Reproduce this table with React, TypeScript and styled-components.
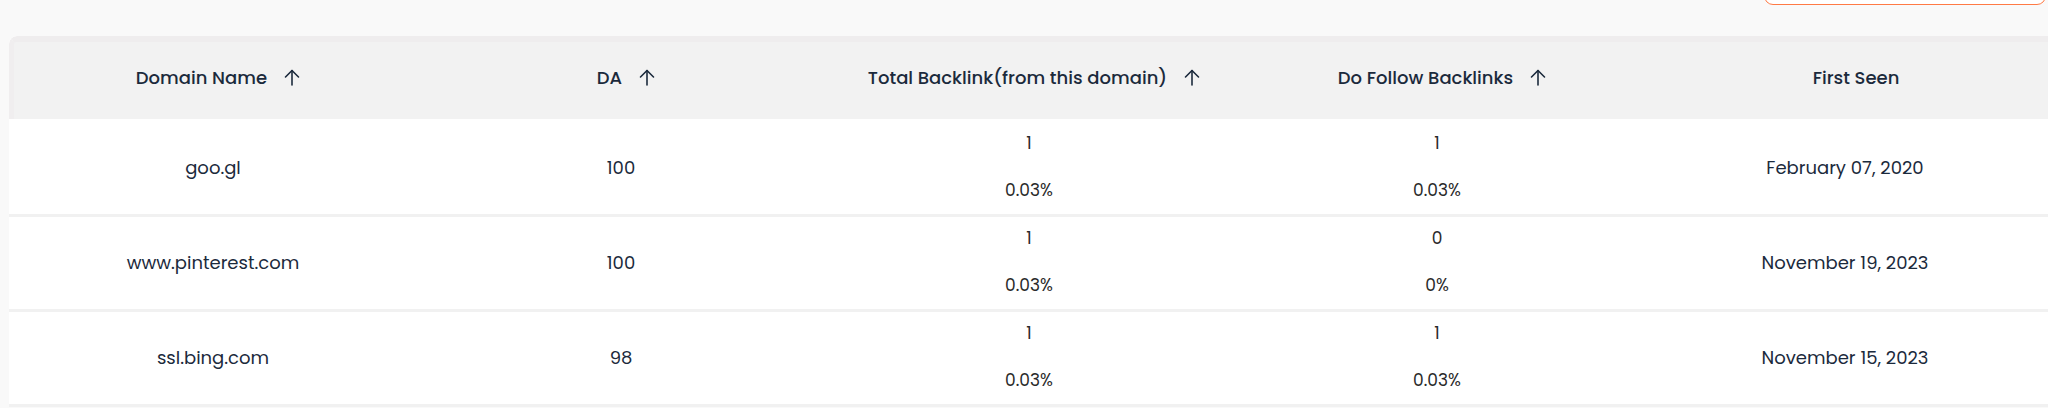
import React from "react";
import styled, { createGlobalStyle } from "styled-components";

const GlobalStyle = createGlobalStyle`
  html, body {
    margin: 0;
    padding: 0;
    background: #f9f9f9;
    overflow: hidden;
  }
  body {
    font-family: Poppins, Inter, "Noto Sans", sans-serif;
  }
`;

const Page = styled.div`
  width: 2048px;
  height: 408px;
  padding-left: 9px;
  box-sizing: border-box;
  background: #f9f9f9;
  display: flex;
  flex-direction: column;
`;

const Toolbar = styled.div`
  height: 36px;
  flex: none;
  display: flex;
  justify-content: flex-end;
  align-items: flex-start;
  padding-right: 2px;
`;

const ExportButton = styled.div`
  width: 282px;
  height: 40px;
  margin-top: -35px;
  border: 1.5px solid #ff7a45;
  border-radius: 9px;
  background: #ffffff;
  box-sizing: border-box;
`;

const Table = styled.div`
  width: 2040px;
  display: flex;
  flex-direction: column;
  background: #ffffff;
  border-top-left-radius: 8px;
  overflow: hidden;
`;

const Grid = styled.div`
  display: grid;
  grid-template-columns: repeat(5, 408px);
`;

const HeaderRow = styled(Grid)`
  height: 83px;
  box-sizing: border-box;
  background: #f2f2f2;
  border-top: 6px solid #efedee;
  border-left: 5px solid #f0eeef;
  border-top-left-radius: 8px;
  padding-bottom: 7px;
`;

const HeaderCell = styled.div<{ $shift?: number }>`
  display: flex;
  align-items: center;
  justify-content: center;
  gap: 17px;
  font-size: 18px;
  font-weight: 500;
  color: #1b2a3c;
  padding-left: ${(p) => p.$shift ?? 0}px;
`;

const SortIcon = styled.svg`
  width: 16px;
  height: 17px;
  flex: none;
  color: #1b2a3c;
`;

const Body = styled.div`
  padding-top: 3px;
  display: flex;
  flex-direction: column;
`;

const Row = styled(Grid)`
  height: 95px;
  box-sizing: border-box;
  border-bottom: 3px solid #f1f1f1;
`;

const Cell = styled.div`
  display: flex;
  align-items: center;
  justify-content: center;
  font-size: 18px;
  font-weight: 400;
  color: #1b2a3c;
  padding-bottom: 2px;
`;

const Stack = styled.div`
  display: flex;
  flex-direction: column;
  align-items: center;
  gap: 26px;
`;

const SubValue = styled.span`
  font-size: 17px;
  line-height: 21px;
  color: #2a2a2a;
`;

const ArrowUp = () => (
  <SortIcon viewBox="0 0 16 17" fill="none" stroke="currentColor" strokeWidth={1.6} strokeLinecap="round" strokeLinejoin="round">
    <path d="M8 16V1.5" />
    <path d="M1.5 8L8 1.5L14.5 8" />
  </SortIcon>
);

type Rec = {
  domain: string;
  da: string;
  total: [string, string];
  follow: [string, string];
  seen: string;
};

const rows: Rec[] = [
  { domain: "goo.gl", da: "100", total: ["1", "0.03%"], follow: ["1", "0.03%"], seen: "February 07, 2020" },
  { domain: "www.pinterest.com", da: "100", total: ["1", "0.03%"], follow: ["0", "0%"], seen: "November 19, 2023" },
  { domain: "ssl.bing.com", da: "98", total: ["1", "0.03%"], follow: ["1", "0.03%"], seen: "November 15, 2023" },
];

const headers: { label: string; sortable: boolean; shift?: number }[] = [
  { label: "Domain Name", sortable: true },
  { label: "DA", sortable: true },
  { label: "Total Backlink(from this domain)", sortable: true },
  { label: "Do Follow Backlinks", sortable: true },
  { label: "First Seen", sortable: false, shift: 12 },
];

export default function App() {
  return (
    <>
      <GlobalStyle />
      <Page>
        <Toolbar>
          <ExportButton />
        </Toolbar>
        <Table>
          <HeaderRow>
            {headers.map((h) => (
              <HeaderCell key={h.label} $shift={h.shift}>
                <span>{h.label}</span>
                {h.sortable && <ArrowUp />}
              </HeaderCell>
            ))}
          </HeaderRow>
          <Body>
            {rows.map((r) => (
              <Row key={r.domain}>
                <Cell>{r.domain}</Cell>
                <Cell>{r.da}</Cell>
                <Cell>
                  <Stack>
                    <SubValue>{r.total[0]}</SubValue>
                    <SubValue>{r.total[1]}</SubValue>
                  </Stack>
                </Cell>
                <Cell>
                  <Stack>
                    <SubValue>{r.follow[0]}</SubValue>
                    <SubValue>{r.follow[1]}</SubValue>
                  </Stack>
                </Cell>
                <Cell>{r.seen}</Cell>
              </Row>
            ))}
          </Body>
        </Table>
      </Page>
    </>
  );
}
